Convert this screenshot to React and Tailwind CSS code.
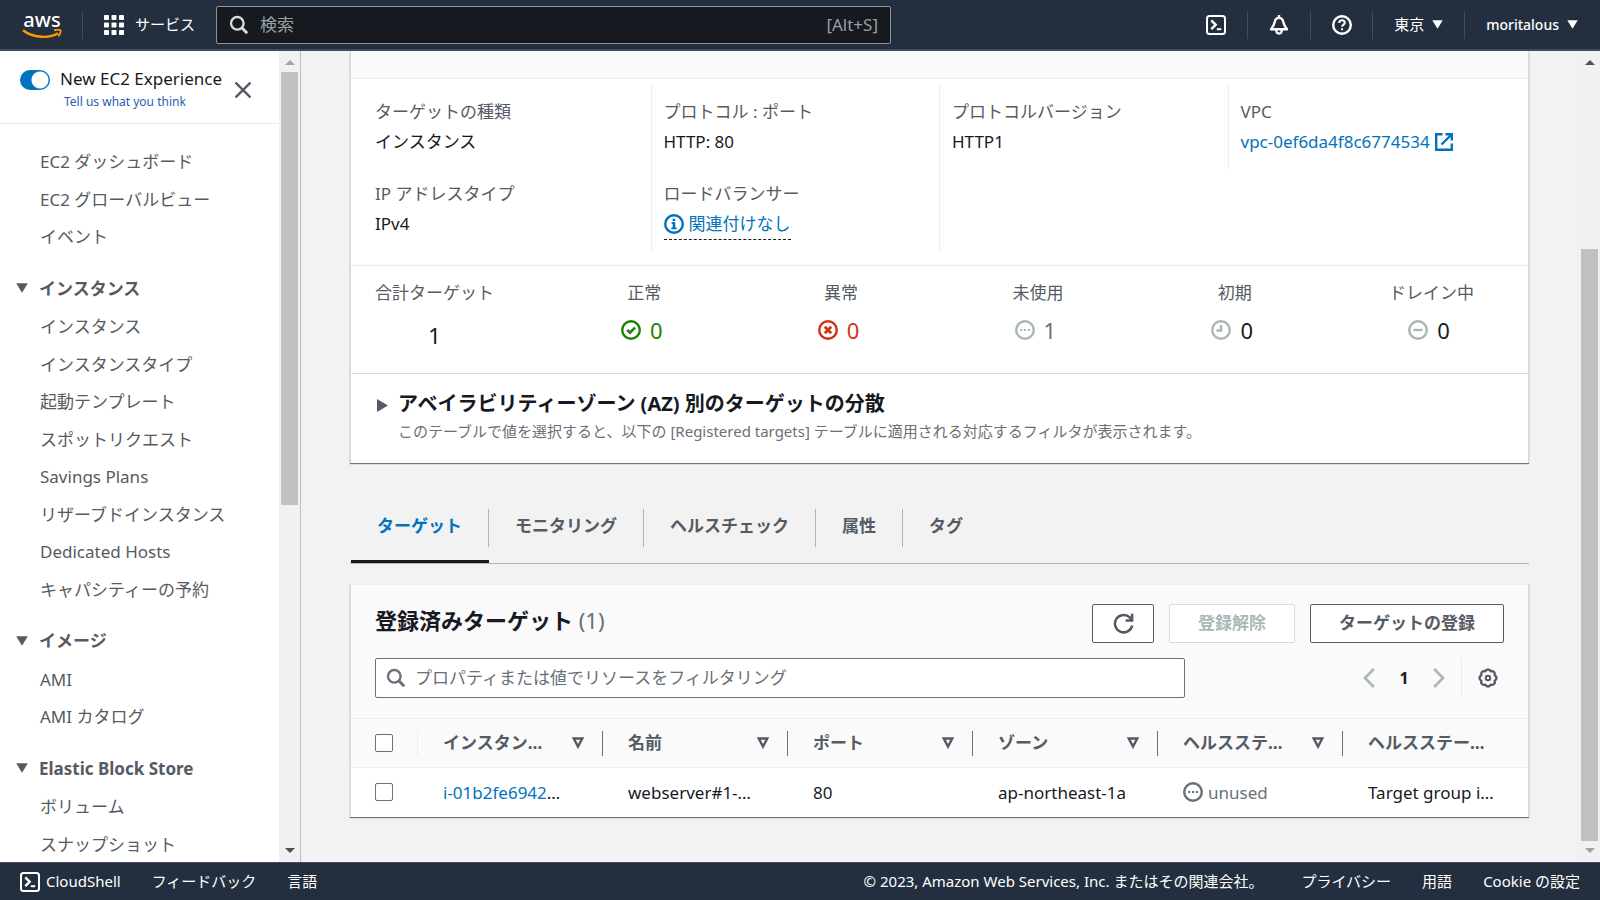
import React from "react";

const FONT = "font-['Noto_Sans','Noto_Sans_CJK_JP',sans-serif]";

function TriangleDown({ className }) {
  return (
    <svg viewBox="0 0 12 10" className={className} fill="currentColor" aria-hidden="true">
      <path d="M0.200 0.200h11.600L6 9.800z" />
    </svg>
  );
}

function ShellIcon({ className }) {
  return (
    <svg viewBox="0 0 20 20" className={className} fill="none" stroke="currentColor" strokeWidth="2" aria-hidden="true">
      <rect x="1" y="1" width="18" height="18" rx="2.500" />
      <path d="M5.300 5.400l4.400 4.400-4.400 4.400" strokeWidth="2.400" />
      <path d="M10.800 14.200h4.400" strokeWidth="2" />
    </svg>
  );
}

function SearchIcon({ className }) {
  return (
    <svg viewBox="0 0 20 20" className={className} fill="none" stroke="currentColor" aria-hidden="true">
      <circle cx="8.3" cy="8.3" r="6.3" strokeWidth="2.4" />
      <path d="M12.8 12.8l5.4 5.4" strokeWidth="3" />
    </svg>
  );
}

function RoundIcon({ className, children }) {
  return (
    <svg viewBox="0 0 20 20" className={className} fill="none" stroke="currentColor" strokeWidth="2" aria-hidden="true">
      <circle cx="10" cy="10" r="8.8" strokeWidth="2.400" />
      {children}
    </svg>
  );
}

const Dots = () => (
  <path d="M5.2 10h2M9 10h2M12.8 10h2" strokeWidth="2.200" />
);

function Logo() {
  return (
    <a href="#home" aria-label="AWS" className="flex w-10 flex-col items-center text-white">
      <span className="text-[20px] leading-[18px] font-medium">aws</span>
      <svg viewBox="0 0 40 10" className="h-[10px] w-10" fill="none" stroke="#ff9900" aria-hidden="true">
        <path d="M1 1.200C11 9 27 9.800 36 4.200" strokeWidth="2.400" />
        <path d="M32 1.400c2.600-.8 5.800-.8 6.400-.2.600.8-.2 4-2 6.200" strokeWidth="1.800" />
      </svg>
    </a>
  );
}

function TopBar() {
  return (
    <header className="flex h-[51px] shrink-0 items-center border-b-2 border-[#414d5c] bg-[#232f3e] px-[22px] text-[15px] text-white">
      <Logo />
      <span className="ml-5 h-7 w-px bg-[#414d5c]" />
      <button className="ml-[21px] flex items-center gap-[11px]">
        <svg viewBox="0 0 20 20" className="size-5" fill="currentColor" aria-hidden="true">
          {[0, 7.5, 15].map((y) =>
            [0, 7.5, 15].map((x) => <rect key={`${x}-${y}`} x={x} y={y} width="5" height="5" rx="0.8" />)
          )}
        </svg>
        サービス
      </button>
      <label className="ml-[21px] flex h-[38px] w-[675px] items-center rounded-[2px] border border-[#8d9399] bg-[#16191f] px-3 text-[17px] text-[#95a0a3]">
        <SearchIcon className="size-5 text-[#d5dbdb]" />
        <input
          type="text"
          aria-label="検索"
          placeholder="検索"
          className="ml-[11px] min-w-0 flex-1 bg-transparent outline-none placeholder:text-[#95a0a3]"
        />
        <span>[Alt+S]</span>
      </label>
      <nav className="ml-auto flex items-center">
        <button aria-label="CloudShell">
          <ShellIcon className="size-5" />
        </button>
        <span className="mx-[21px] h-7 w-px bg-[#414d5c]" />
        <button aria-label="通知">
          <svg viewBox="0 0 20 20" className="size-5" fill="none" stroke="currentColor" aria-hidden="true">
            <path d="M10 0v3" strokeWidth="2.400" />
            <path
              d="M10 2.900c-2.600 0-3.800 1.700-4.300 4-.7 3.200-1.500 4.800-3.700 7.300h16c-2.200-2.500-3-4.100-3.700-7.300-.5-2.300-1.700-4-4.300-4z"
              strokeWidth="2.400"
              strokeLinejoin="round"
            />
            <path d="M7.200 14.800c0 2.600 1 3.800 2.800 3.800s2.800-1.200 2.800-3.800" strokeWidth="2.200" />
          </svg>
        </button>
        <span className="mx-[21px] h-7 w-px bg-[#414d5c]" />
        <button aria-label="ヘルプ">
          <RoundIcon className="size-5">
            <path d="M7.200 8c0-1.700 1.200-2.800 2.800-2.800s2.800 1 2.800 2.500c0 1.900-2.700 2-2.700 4" />
            <path d="M10.100 13.200v2" />
          </RoundIcon>
        </button>
        <span className="mr-[21px] ml-5 h-7 w-px bg-[#414d5c]" />
        <button className="flex items-center gap-2">
          東京
          <TriangleDown className="h-[9px] w-[11px]" />
        </button>
        <span className="mx-[21px] h-7 w-px bg-[#414d5c]" />
        <button className="flex items-center gap-2 text-[14px] font-medium">
          moritalous
          <TriangleDown className="h-[9px] w-[11px]" />
        </button>
      </nav>
    </header>
  );
}

const topLinks = ["EC2 ダッシュボード", "EC2 グローバルビュー", "イベント"];
const sections = [
  {
    title: "インスタンス",
    links: [
      "インスタンス",
      "インスタンスタイプ",
      "起動テンプレート",
      "スポットリクエスト",
      "Savings Plans",
      "リザーブドインスタンス",
      "Dedicated Hosts",
      "キャパシティーの予約",
    ],
  },
  { title: "イメージ", links: ["AMI", "AMI カタログ"] },
  { title: "Elastic Block Store", links: ["ボリューム", "スナップショット"] },
];

function LinkList({ links }) {
  return (
    <ul>
      {links.map((text) => (
        <li key={text} className="py-1.5 pl-10 leading-normal">
          <a href="#nav">{text}</a>
        </li>
      ))}
    </ul>
  );
}

function Arrow({ up, className }) {
  return (
    <svg viewBox="0 0 10 5" className={className} fill="currentColor" aria-hidden="true">
      <path d={up ? "M0 5L5 0l5 5z" : "M0 0l5 5 5-5z"} />
    </svg>
  );
}

function Sidebar() {
  return (
    <aside className="flex w-[301px] shrink-0 border-r border-[#bcc0c4] bg-white text-[17px] text-[#545b64]">
      <div className="min-w-0 flex-1 overflow-hidden">
        <div className="flex h-[73px] items-start border-b border-[#eaeded] pl-5">
          <input
            id="experience"
            type="checkbox"
            role="switch"
            defaultChecked
            className="mt-[19px] h-5 w-[30px] appearance-none rounded-full bg-[#0073bb] bg-[radial-gradient(circle_at_20px_10px,#fff_8px,transparent_9px)]"
          />
          <div className="mt-4 ml-[10px]">
            <label htmlFor="experience" className="block leading-6 text-[#16191f]">
              New EC2 Experience
            </label>
            <a href="#feedback" className="ml-1 block text-[12px] leading-[22px] text-[#2a5db0]">
              Tell us what you think
            </a>
          </div>
          <button aria-label="閉じる" className="mt-[31px] ml-[13px]">
            <svg viewBox="0 0 16 16" className="size-4" stroke="currentColor" strokeWidth="2.400" aria-hidden="true">
              <path d="M0.500 0.500l15 15M15.500 0.500l-15 15" />
            </svg>
          </button>
        </div>
        <nav className="pt-[19px]">
          <LinkList links={topLinks} />
          {sections.map((s) => (
            <section key={s.title} className="pt-3.5">
              <button className="flex w-full items-center pt-1.5 pb-[7px] pl-4 leading-normal font-bold">
                <TriangleDown className="mr-[11px] h-[10px] w-3" />
                {s.title}
              </button>
              <LinkList links={s.links} />
            </section>
          ))}
        </nav>
      </div>
      <div className="flex w-[21px] flex-col items-center bg-[#f1f1f1] pt-[9px] pb-[9px]">
        <Arrow up className="mb-[7px] h-[5px] w-[10px] text-[#a3a3a3]" />
        <div className="h-[433px] w-[17px] bg-[#c1c1c1]" />
        <Arrow className="mt-auto h-[5px] w-[10px] text-[#505050]" />
      </div>
    </aside>
  );
}

const CARD = "border-x border-[#d5dbdb] bg-white shadow-[0_1px_1px_0_#6b7680]";

function Field({ label, children }) {
  return (
    <div className="py-[13px] leading-[26px]">
      <dt className="text-[#545b64]">{label}</dt>
      <dd className="mt-1 h-[26px]">{children}</dd>
    </div>
  );
}

const totals = [
  { label: "正常", value: 0, tone: "text-[#1d8102]", icon: "text-[#1d8102]", mark: <path d="M6.200 9.800l2.800 2.800 5-5" strokeWidth="2.600" /> },
  { label: "異常", value: 0, tone: "text-[#d13212]", icon: "text-[#d13212]", mark: <path d="M6.800 6.800l6.400 6.400M13.200 6.800l-6.400 6.400" strokeWidth="2.800" /> },
  { label: "未使用", value: 1, tone: "text-[#687078]", icon: "text-[#aab7b8]", mark: <Dots /> },
  { label: "初期", value: 0, tone: "text-[#16191f]", icon: "text-[#aab7b8]", mark: <path d="M10 5v5.500H5.500" strokeWidth="2.400" /> },
  { label: "ドレイン中", value: 0, tone: "text-[#16191f]", icon: "text-[#aab7b8]", mark: <path d="M5.500 10h9" strokeWidth="2.400" /> },
];

function Details() {
  return (
    <section className={CARD}>
      <div className="h-7 border-b border-[#eaeded] bg-[#fafafa]" />
      <dl className="grid grid-cols-4 items-start border-b border-[#eaeded] pt-1.5 pr-[11px] pb-3.5 pl-3">
        <div className="border-r border-[#eaeded] py-px pl-3">
          <Field label="ターゲットの種類">インスタンス</Field>
          <Field label="IP アドレスタイプ">IPv4</Field>
        </div>
        <div className="border-r border-[#eaeded] py-px pl-3">
          <Field label="プロトコル : ポート">HTTP: 80</Field>
          <Field label="ロードバランサー">
            <button className="flex items-center gap-[5px] border-b border-dashed border-[#16191f] pb-0.5 text-[#0073bb]">
              <RoundIcon className="size-5">
                <path d="M10 4.800v2.200" strokeWidth="2.600" />
                <path d="M7.600 9.200H10v5M7.300 14.300h5.400" strokeWidth="1.800" />
                <path d="M10 8.300v6" strokeWidth="2.600" />
              </RoundIcon>
              関連付けなし
            </button>
          </Field>
        </div>
        <div className="border-r border-[#eaeded] py-px pl-3">
          <Field label="プロトコルバージョン">HTTP1</Field>
        </div>
        <div className="py-px pl-3">
          <Field label="VPC">
            <a href="#vpc" className="flex items-center gap-[5px] text-[#0073bb]">
              vpc-0ef6da4f8c6774534
              <svg viewBox="0 0 18 18" className="size-[18px]" fill="none" stroke="currentColor" strokeWidth="2.400" aria-hidden="true">
                <path d="M7.500 1.200H1.200v15.600h15.600v-6.300" />
                <path d="M10.500 1.200h6.300v6.300M16.500 1.500L6.500 11.500" />
              </svg>
            </a>
          </Field>
        </div>
      </dl>
      <div className="-mx-0.5 grid h-[107px] grid-cols-6 pt-[14px] text-center">
        <div className="pl-[26px] text-left">
          <div className="inline-block text-center">
            <p className="leading-[26px] text-[#545b64]">合計ターゲット</p>
            <p className="mt-[13px] text-[22px] leading-8">1</p>
          </div>
        </div>
        {totals.map((t) => (
          <div key={t.label}>
            <p className="leading-[26px] text-[#545b64]">{t.label}</p>
            <p className="mt-2 flex items-center justify-center gap-[9px] pr-[5px] text-[22px] leading-8">
              <RoundIcon className={`size-5 ${t.icon}`}>{t.mark}</RoundIcon>
              <span className={t.tone}>{t.value}</span>
            </p>
          </div>
        ))}
      </div>
      <div className="flex h-[90px] items-start border-t border-[#d5dbdb] pt-[14px] pl-[26px]">
        <button aria-label="展開" className="mt-[11px] mr-[10px] text-[#545b64]">
          <svg viewBox="0 0 11 13" className="h-[13px] w-[11px]" fill="currentColor" aria-hidden="true">
            <path d="M0 0l11 6.500L0 13z" />
          </svg>
        </button>
        <div>
          <h3 className="text-[20px] leading-8 font-bold">アベイラビリティーゾーン (AZ) 別のターゲットの分散</h3>
          <p className="text-[15px] leading-[22px] text-[#687078]">
            このテーブルで値を選択すると、以下の [Registered targets] テーブルに適用される対応するフィルタが表示されます。
          </p>
        </div>
      </div>
    </section>
  );
}

function Tabs() {
  const tabs = ["ターゲット", "モニタリング", "ヘルスチェック", "属性", "タグ"];
  return (
    <div role="tablist" className="mt-[35px] flex border-b border-[#aab7b8] pl-px font-bold text-[#545b64]">
      {tabs.map((t, i) => (
        <button
          key={t}
          role="tab"
          aria-selected={i === 0}
          className={`flex h-[65px] border-b-[3px] pt-[11px] ${i === 0 ? "border-[#16191f] text-[#0073bb]" : "border-transparent"}`}
        >
          <span
            className={`h-[38px] px-[26px] leading-[34px] ${i < tabs.length - 1 ? "border-r border-[#aab7b8]" : ""}`}
          >
            {t}
          </span>
        </button>
      ))}
    </div>
  );
}

const headers = ["インスタン…", "名前", "ポート", "ゾーン", "ヘルスステ…", "ヘルスステー…"];

function Targets() {
  return (
    <section className={`mt-[20px] ${CARD} border-t border-t-[#eaeded]`}>
      <div className="bg-[#fafafa] px-6 pt-[19px] pb-5">
        <div className="flex items-start">
          <h2 className="text-[22px] leading-8 font-bold">
            登録済みターゲット <span className="font-normal text-[#687078]">(1)</span>
          </h2>
          <div className="ml-auto flex gap-[15px] font-bold text-[#545b64]">
            <button aria-label="更新" className="flex h-[39px] w-[62px] items-center justify-center rounded-[2px] border border-[#545b64] bg-white">
              <svg viewBox="0 0 20 20" className="size-[21px]" fill="none" stroke="currentColor" strokeWidth="2.400" aria-hidden="true">
                <path d="M18.300 11.800A8.300 8.300 0 1 1 16.200 4.400l1.600 2" />
                <path d="M18.200 0.600v6.600h-6.200" />
              </svg>
            </button>
            <button disabled className="h-[39px] rounded-[2px] border border-[#d5dbdb] bg-white px-7 pb-0.5 text-[#aab7b8]">
              登録解除
            </button>
            <button className="h-[39px] rounded-[2px] border border-[#545b64] bg-white px-7 pb-0.5">ターゲットの登録</button>
          </div>
        </div>
        <div className="mt-[15px] flex h-10 items-center">
          <label className="flex h-10 w-[810px] items-center rounded-[2px] border border-[#687078] bg-white px-[10px] text-[#687078]">
            <SearchIcon className="size-5" />
            <input
              type="text"
              aria-label="フィルター"
              placeholder="プロパティまたは値でリソースをフィルタリング"
              className="ml-[9px] min-w-0 flex-1 outline-none placeholder:text-[#687078]"
            />
          </label>
          <div className="ml-auto flex items-center pr-[6px]">
            <button aria-label="前へ" disabled className="text-[#aab7b8]">
              <svg viewBox="0 0 12 20" className="h-5 w-3" fill="none" stroke="currentColor" strokeWidth="2.600" aria-hidden="true">
                <path d="M10.800 1L2 10l8.800 9" />
              </svg>
            </button>
            <span className="w-[58px] text-center text-[16px] font-bold">1</span>
            <button aria-label="次へ" disabled className="text-[#aab7b8]">
              <svg viewBox="0 0 12 20" className="h-5 w-3" fill="none" stroke="currentColor" strokeWidth="2.600" aria-hidden="true">
                <path d="M1.200 1L10 10l-8.800 9" />
              </svg>
            </button>
            <span className="mr-4 ml-4 h-10 w-px bg-[#eaeded]" />
            <button aria-label="設定" className="text-[#545b64]">
              <svg viewBox="0 0 20 20" className="size-5" fill="none" stroke="currentColor" aria-hidden="true">
                <path
                  d="M7.240 3.350A3 3 0 0 1 12.760 3.350A3 3 0 0 1 16.650 7.240A3 3 0 0 1 16.650 12.760A3 3 0 0 1 12.760 16.650A3 3 0 0 1 7.240 16.650A3 3 0 0 1 3.350 12.760A3 3 0 0 1 3.350 7.240A3 3 0 0 1 7.240 3.350z"
                  strokeWidth="2.400"
                  strokeLinejoin="round"
                />
                <circle cx="10" cy="10" r="2.200" strokeWidth="2" />
              </svg>
            </button>
          </div>
        </div>
      </div>
      <table className="w-full table-fixed border-t border-[#eaeded] text-left">
        <colgroup>
          <col className="w-[67px]" />
          {headers.map((h) => (
            <col key={h} />
          ))}
        </colgroup>
        <thead>
          <tr className="h-[49px] border-b border-[#eaeded] bg-[#fafafa] text-[#545b64]">
            <th className="p-0">
              <div className="flex h-[25px] items-center border-r border-[#eaeded] pl-6">
                <input type="checkbox" aria-label="すべて選択" className="size-[18px] appearance-none rounded-[2px] border border-[#687078] bg-white" />
              </div>
            </th>
            {headers.map((h, i) => (
              <th key={h} className="p-0">
                <div className={`flex h-[25px] items-center justify-between pr-[18px] pl-[25px] whitespace-nowrap ${i < 5 ? "border-r border-[#687078]" : ""}`}>
                  {h}
                  {i < 5 && (
                    <svg viewBox="0 0 12 12" className="h-3 w-3 shrink-0" fill="none" stroke="currentColor" strokeWidth="2.400" aria-hidden="true">
                      <path d="M1.800 1.500h8.400L6 9.600z" />
                    </svg>
                  )}
                </div>
              </th>
            ))}
          </tr>
        </thead>
        <tbody>
          <tr className="h-[49px] whitespace-nowrap">
            <td className="p-0 pl-6">
              <input type="checkbox" aria-label="選択" className="block size-[18px] appearance-none rounded-[2px] border border-[#687078] bg-white" />
            </td>
            <td className="p-0 pl-[25px]">
              <a href="#instance" className="text-[#0073bb]">i-01b2fe6942</a>…
            </td>
            <td className="p-0 pl-[25px]">webserver#1-…</td>
            <td className="p-0 pl-[25px]">80</td>
            <td className="p-0 pl-[25px]">ap-northeast-1a</td>
            <td className="p-0 pl-[25px] text-[#687078]">
              <span className="flex items-center gap-[5px]">
                <RoundIcon className="size-5">
                  <Dots />
                </RoundIcon>
                unused
              </span>
            </td>
            <td className="p-0 pl-[25px]">Target group i…</td>
          </tr>
        </tbody>
      </table>
    </section>
  );
}

function Footer() {
  return (
    <footer className="flex h-[38px] shrink-0 items-center border-t border-[#414d5c] bg-[#232f3e] px-5 text-[15px] text-white">
      <button className="flex items-center gap-[6px]">
        <ShellIcon className="size-5" />
        CloudShell
      </button>
      <a href="#feedback" className="ml-[31px]">フィードバック</a>
      <button className="ml-[31px]">言語</button>
      <p className="ml-auto">© 2023, Amazon Web Services, Inc. またはその関連会社。</p>
      <a href="#privacy" className="ml-[38px]">プライバシー</a>
      <a href="#terms" className="ml-[31px]">用語</a>
      <a href="#cookies" className="ml-[31px]">Cookie の設定</a>
    </footer>
  );
}

export default function App() {
  return (
    <div className={`flex h-screen flex-col overflow-hidden bg-[#f2f2f2] text-[17px] text-[#16191f] ${FONT}`}>
      <TopBar />
      <div className="flex min-h-0 flex-1">
        <Sidebar />
        <main className="min-w-0 flex-1 overflow-hidden pr-[50px] pl-[49px]">
          <Details />
          <Tabs />
          <Targets />
        </main>
        <div className="flex w-[21px] shrink-0 flex-col items-center bg-[#f1f1f1] pt-[9px] pb-[9px]">
          <Arrow up className="h-[5px] w-[10px] text-[#505050]" />
          <div className="mt-auto mb-[7px] h-[592px] w-[17px] bg-[#c1c1c1]" />
          <Arrow className="h-[5px] w-[10px] text-[#a3a3a3]" />
        </div>
      </div>
      <Footer />
    </div>
  );
}
